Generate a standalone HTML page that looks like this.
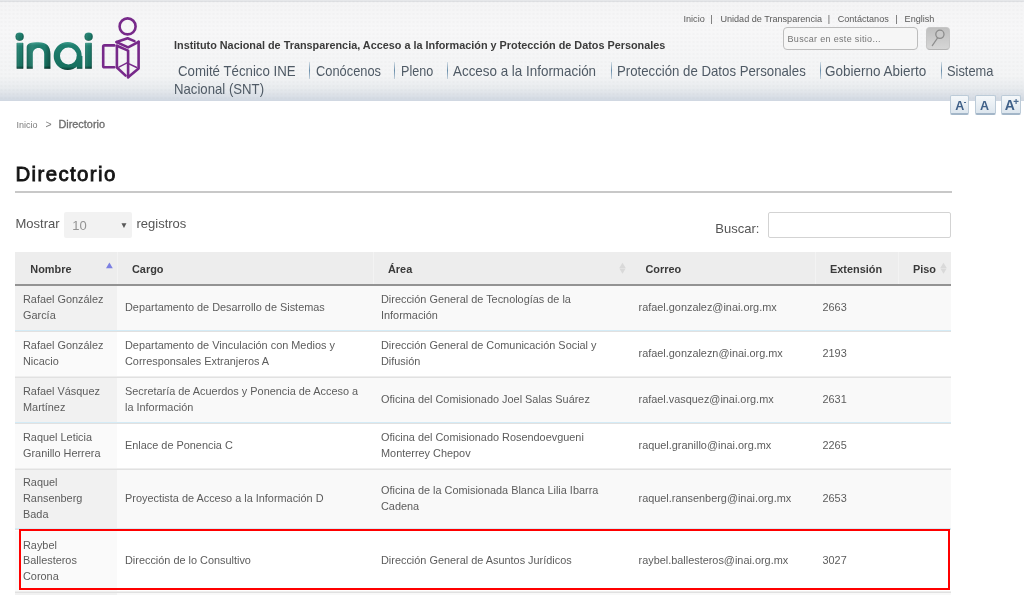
<!DOCTYPE html>
<html><head><meta charset="utf-8">
<style>
*{margin:0;padding:0;box-sizing:border-box}
html,body{width:1024px;height:595px;overflow:hidden;background:#fff;font-family:"Liberation Sans",sans-serif;position:relative}
#wrap{position:absolute;left:0;top:0;width:1024px;height:595px;will-change:transform}
.abs{position:absolute;white-space:nowrap}
#hdr{position:absolute;left:0;top:0;width:1024px;height:100.5px;
 background:linear-gradient(to bottom,#e9eaec 0px,#dfe1e4 1.5px,#f4f4f5 2.5px,#f7f7f8 30px,#f3f4f5 76px,#e8ebee 88px,#dde2e8 94.5px,#d1d8e2 100.5px)}
#dots{position:absolute;left:0;top:0;width:1024px;height:100.5px;
 background-image:radial-gradient(circle,rgba(0,0,0,0.022) 0.6px,transparent 0.9px);background-size:4px 4px;background-position:-0.5px 0px}
.toplinks{font-size:9.1px;color:#5a5a5a;top:14px}
.title{left:174px;top:39px;font-size:10.85px;font-weight:bold;color:#3b3b3b}
.nav{font-size:14.8px;color:#4f5a65;top:63.2px;transform-origin:0 0}
.sep{position:absolute;width:1.3px;height:16.5px;top:62px;background:linear-gradient(#d3dde5,#6b8fab 50%,#c3d0db)}
.fbtn{position:absolute;top:94.9px;width:20px;height:20.6px;border-radius:2px;
 background:linear-gradient(#f5f8fa,#dde6ee);border:1px solid #bccbd8;border-bottom:2px solid #a3b6c8}
.fA{top:98.6px;font-size:12.5px;font-weight:bold;color:#3f6088;line-height:14px}
.crumb{}
.row{position:absolute;left:15px;width:936px}
.c{position:absolute;top:0;bottom:2px;display:flex;align-items:center;font-size:10.9px;line-height:15.8px;color:#5c5c5c;white-space:normal}
.th{font-weight:bold;color:#3a3a3a;top:4px;bottom:0}
</style></head><body><div id="wrap">
<div id="hdr"></div><div id="dots"></div>

<!-- logo -->
<svg class="abs" style="left:0;top:0" width="160" height="100" viewBox="0 0 160 100">
 <defs>
  <linearGradient id="tv" x1="0" y1="0" x2="0" y2="1">
   <stop offset="0" stop-color="#3f9d8d"/><stop offset="0.12" stop-color="#1f7f6f"/><stop offset="0.88" stop-color="#17705f"/><stop offset="1" stop-color="#06382f"/>
  </linearGradient>
  <linearGradient id="ta" gradientUnits="userSpaceOnUse" x1="0" y1="42" x2="0" y2="70">
   <stop offset="0" stop-color="#3f9d8d"/><stop offset="0.12" stop-color="#1f7f6f"/><stop offset="0.88" stop-color="#17705f"/><stop offset="1" stop-color="#06382f"/>
  </linearGradient>
  <linearGradient id="th" x1="0" y1="0" x2="1" y2="0">
   <stop offset="0" stop-color="#000" stop-opacity="0.12"/><stop offset="0.25" stop-color="#fff" stop-opacity="0.06"/><stop offset="0.75" stop-color="#000" stop-opacity="0"/><stop offset="1" stop-color="#000" stop-opacity="0.28"/>
  </linearGradient>
 </defs>
 <g fill="url(#tv)">
  <circle cx="19.6" cy="36.7" r="4.1"/>
  <rect x="16.6" y="42.8" width="6.7" height="26" rx="0.6"/>
  <path d="M26.7 68.8 V47.5 C26.7 43.2 30.5 42.2 38.5 42.2 C47 42.2 50.4 46.5 50.4 54 V68.8 H44.2 V54 C44.2 50.2 42 47.9 38.5 47.9 C35 47.9 32.8 50.2 32.8 54 V68.8 Z"/>
  <path fill="url(#ta)" fill-rule="evenodd" d="M53.7 56 A14 14 0 1 0 81.7 56 A14 14 0 1 0 53.7 56 Z M60 56 A8.4 8.4 0 1 0 76.8 56 A8.4 8.4 0 1 0 60 56 Z"/>
  <rect fill="url(#ta)" x="76.8" y="56" width="5.6" height="12.8"/>
  <circle cx="88.6" cy="36.7" r="4.1"/>
  <rect x="85.1" y="42.8" width="6.7" height="26" rx="0.6"/>
 </g>
 <g fill="url(#th)">
  <circle cx="19.6" cy="36.7" r="4.1"/>
  <rect x="16.6" y="42.8" width="6.7" height="26" rx="0.6"/>
  <path d="M26.7 68.8 V47.5 C26.7 43.2 30.5 42.2 38.5 42.2 C47 42.2 50.4 46.5 50.4 54 V68.8 H44.2 V54 C44.2 50.2 42 47.9 38.5 47.9 C35 47.9 32.8 50.2 32.8 54 V68.8 Z"/>
  <circle cx="88.6" cy="36.7" r="4.1"/>
  <rect x="85.1" y="42.8" width="6.7" height="26" rx="0.6"/>
 </g>
 <g fill="none" stroke="#77298a" stroke-width="2.6" stroke-linejoin="round" stroke-linecap="round">
  <circle cx="127.6" cy="26.4" r="8"/>
  <path d="M114.3 45.4 H104.5 Q103.2 45.4 103.2 46.7 V65.9 Q103.2 67.2 104.5 67.2 H114.3"/>
  <path d="M116.6 42.1 L127.6 38.3 L134.5 41.1"/>
  <path d="M116.6 42.1 L128.1 47.4 L138.6 41.9"/>
  <path d="M116.9 45.8 L128.1 50.6 L128.1 77.2"/>
  <path d="M116.9 45.8 V67.5 L125.6 75.6"/>
  <path d="M138.6 41.9 V68.4 L128.1 77.2"/>
  <path d="M118.8 67.1 L127 62.8 L136.7 67.5" stroke-width="1.4"/>
 </g>
</svg>

<div class="abs title">Instituto Nacional de Transparencia, Acceso a la Información y Protección de Datos Personales</div>

<div class="abs toplinks" style="left:683.5px">Inicio</div>
<div class="abs toplinks" style="left:710.2px">|</div>
<div class="abs toplinks" style="left:720.4px">Unidad de Transparencia</div>
<div class="abs toplinks" style="left:827.7px">|</div>
<div class="abs toplinks" style="left:837.7px">Contáctanos</div>
<div class="abs toplinks" style="left:895.2px">|</div>
<div class="abs toplinks" style="left:904.6px">English</div>

<div class="abs" style="left:782.5px;top:27px;width:135.5px;height:22.5px;border:1px solid #bdbdbd;border-radius:4px;background:#f6f6f6"></div>
<div class="abs" style="left:787.5px;top:33.8px;font-size:9px;color:#747474;letter-spacing:0.32px">Buscar en este sitio...</div>
<div class="abs" style="left:926px;top:27px;width:23.6px;height:22.6px;border-radius:4px;background:linear-gradient(#bfbfbf,#d6d6d6);border:1px solid #c6c6c6;border-bottom-color:#b4b4b4"></div>
<svg class="abs" style="left:926px;top:27px" width="24" height="23" viewBox="0 0 24 23">
 <circle cx="13.9" cy="7.3" r="4.1" fill="#c9c9c9" stroke="#8c8c8c" stroke-width="1.3"/>
 <path d="M11.6 10.8 L6.3 18.6" stroke="#8e8e8e" stroke-width="1.2" stroke-linecap="round"/>
</svg>

<div class="abs nav" style="left:178.3px;transform:scaleX(0.896)">Comité Técnico INE</div>
<div class="sep" style="left:309px"></div>
<div class="abs nav" style="left:315.6px;transform:scaleX(0.868)">Conócenos</div>
<div class="sep" style="left:393.5px"></div>
<div class="abs nav" style="left:400.6px;transform:scaleX(0.85)">Pleno</div>
<div class="sep" style="left:446.5px"></div>
<div class="abs nav" style="left:453px;transform:scaleX(0.906)">Acceso a la Información</div>
<div class="sep" style="left:610.5px"></div>
<div class="abs nav" style="left:617.2px;transform:scaleX(0.893)">Protección de Datos Personales</div>
<div class="sep" style="left:820px"></div>
<div class="abs nav" style="left:825.4px;transform:scaleX(0.911)">Gobierno Abierto</div>
<div class="sep" style="left:940.5px"></div>
<div class="abs nav" style="left:946.5px;transform:scaleX(0.869)">Sistema</div>
<div class="abs nav" style="left:173.8px;top:80.9px;transform:scaleX(0.89)">Nacional (SNT)</div>

<div class="fbtn" style="left:949.5px;width:19.3px"></div>
<div class="fbtn" style="left:974.9px;width:20.7px"></div>
<div class="fbtn" style="left:1000.6px;width:20px"></div>
<div class="abs fA" style="left:955.2px">A</div><div class="abs" style="left:963.6px;top:101.6px;width:2.6px;height:1.3px;background:#4a6a90"></div>
<div class="abs fA" style="left:980px">A</div>
<div class="abs fA" style="left:1004.8px;font-size:14px;top:97.6px">A</div>
<svg class="abs" style="left:1012px;top:98px" width="8" height="8"><path d="M1.6 3.4 H6.6 M4.1 1 V5.9" stroke="#4a6a90" stroke-width="1.2"/></svg>
<div class="abs crumb" style="left:16.6px;top:119.8px;font-size:9px;color:#7c7c7c">Inicio</div>
<div class="abs crumb" style="left:45.6px;top:118.4px;font-size:10.5px;color:#808080">&gt;</div>
<div class="abs crumb" style="left:58.4px;top:117.8px;font-size:10.9px;color:#6c6c6c;-webkit-text-stroke:0.3px #6c6c6c">Directorio</div>
<div class="abs" style="left:15.4px;top:162.9px;font-size:20.4px;letter-spacing:1.4px;-webkit-text-stroke:0.85px #141414;color:#141414">Directorio</div>
<div class="abs" style="left:15px;top:191px;width:937px;height:2px;background:#c8c8c8"></div>

<div class="abs" style="left:15.5px;top:216px;font-size:13px;color:#555">Mostrar</div>
<div class="abs" style="left:64px;top:212px;width:68px;height:26px;background:#f2f2f2;border-radius:2px"></div>
<div class="abs" style="left:72.2px;top:217.7px;font-size:13px;color:#939393">10</div>
<div class="abs" style="left:119.8px;top:219.6px;font-size:8.5px;color:#585858">▼</div>
<div class="abs" style="left:136.5px;top:216px;font-size:13px;color:#555">registros</div>

<div class="abs" style="left:715.3px;top:221px;font-size:13px;color:#555">Buscar:</div>
<div class="abs" style="left:768px;top:211.5px;width:183.4px;height:26.3px;border:1px solid #d3d3d3;border-radius:2px;background:#fff"></div>

<!-- table -->
<div class="row" style="top:252px;height:34px;background:#ededed;border-bottom:2px solid #939393">
 <div class="abs" style="left:102.2px;top:0;width:1px;height:32px;background:#f3f3f3"></div>
 <div class="abs" style="left:358.4px;top:0;width:1px;height:32px;background:#f3f3f3"></div>
 <div class="abs" style="left:799.5px;top:0;width:1px;height:32px;background:#f3f3f3"></div>
 <div class="abs" style="left:882.8px;top:0;width:1px;height:32px;background:#f3f3f3"></div>
 <svg class="abs" style="left:90px;top:10px" width="10" height="8"><path d="M1 6.3 L4.4 0.5 L7.8 6.3 Z" fill="#7c80e2"/></svg>
 <svg class="abs" style="left:603px;top:10px" width="10" height="14"><path d="M1.3 5.9 L4.5 0.7 L7.7 5.9 Z M1.3 6.6 L4.5 11.8 L7.7 6.6 Z" fill="#d9d9d9"/></svg>
 <svg class="abs" style="left:924.2px;top:10px" width="10" height="14"><path d="M1.3 5.9 L4.5 0.7 L7.7 5.9 Z M1.3 6.6 L4.5 11.8 L7.7 6.6 Z" fill="#d9d9d9"/></svg>
 <div class="c th" style="left:15.3px">Nombre</div>
 <div class="c th" style="left:117px">Cargo</div>
 <div class="c th" style="left:373px">Área</div>
 <div class="c th" style="left:630.5px">Correo</div>
 <div class="c th" style="left:815px">Extensión</div>
 <div class="c th" style="left:898px">Piso</div>
</div>

<div class="row" style="top:286px;height:46px;background:#f9f9f9">
 <div class="c" style="left:0;width:102px;background:#f1f1f1;padding:0 8px">Rafael González García</div>
 <div class="c" style="left:102px;width:256px;padding:0 8px">Departamento de Desarrollo de Sistemas</div>
 <div class="c" style="left:358px;width:257px;padding:0 8px">Dirección General de Tecnologías de la Información</div>
 <div class="c" style="left:615.5px;width:184px;padding:0 8px">rafael.gonzalez@inai.org.mx</div>
 <div class="c" style="left:799.5px;width:82.5px;padding:0 8px">2663</div>
 <div class="abs" style="left:0;bottom:1px;width:936px;height:1px;background:#d4ebf6"></div>
 <div class="abs" style="left:0;bottom:0;width:936px;height:1px;background:#e1e1e1"></div>
</div>
<div class="row" style="top:332px;height:46px;background:#ffffff">
 <div class="c" style="left:0;width:102px;background:#fafafa;padding:0 8px">Rafael González Nicacio</div>
 <div class="c" style="left:102px;width:256px;padding:0 8px">Departamento de Vinculación con Medios y Corresponsales Extranjeros A</div>
 <div class="c" style="left:358px;width:257px;padding:0 8px">Dirección General de Comunicación Social y Difusión</div>
 <div class="c" style="left:615.5px;width:184px;padding:0 8px">rafael.gonzalezn@inai.org.mx</div>
 <div class="c" style="left:799.5px;width:82.5px;padding:0 8px">2193</div>
 <div class="abs" style="left:0;bottom:1px;width:936px;height:1px;background:#eeeeee"></div>
 <div class="abs" style="left:0;bottom:0;width:936px;height:1px;background:#e1e1e1"></div>
</div>
<div class="row" style="top:378px;height:46px;background:#f9f9f9">
 <div class="c" style="left:0;width:102px;background:#f1f1f1;padding:0 8px">Rafael Vásquez Martínez</div>
 <div class="c" style="left:102px;width:256px;padding:0 8px">Secretaría de Acuerdos y Ponencia de Acceso a la Información</div>
 <div class="c" style="left:358px;width:257px;padding:0 8px">Oficina del Comisionado Joel Salas Suárez</div>
 <div class="c" style="left:615.5px;width:184px;padding:0 8px">rafael.vasquez@inai.org.mx</div>
 <div class="c" style="left:799.5px;width:82.5px;padding:0 8px">2631</div>
 <div class="abs" style="left:0;bottom:1px;width:936px;height:1px;background:#d4ebf6"></div>
 <div class="abs" style="left:0;bottom:0;width:936px;height:1px;background:#e1e1e1"></div>
</div>
<div class="row" style="top:424px;height:46px;background:#ffffff">
 <div class="c" style="left:0;width:102px;background:#fafafa;padding:0 8px">Raquel Leticia Granillo Herrera</div>
 <div class="c" style="left:102px;width:256px;padding:0 8px">Enlace de Ponencia C</div>
 <div class="c" style="left:358px;width:257px;padding:0 8px">Oficina del Comisionado Rosendoevgueni Monterrey Chepov</div>
 <div class="c" style="left:615.5px;width:184px;padding:0 8px">raquel.granillo@inai.org.mx</div>
 <div class="c" style="left:799.5px;width:82.5px;padding:0 8px">2265</div>
 <div class="abs" style="left:0;bottom:1px;width:936px;height:1px;background:#eeeeee"></div>
 <div class="abs" style="left:0;bottom:0;width:936px;height:1px;background:#e1e1e1"></div>
</div>
<div class="row" style="top:470px;height:60px;background:#f9f9f9">
 <div class="c" style="left:0;width:102px;background:#f1f1f1;padding:0 8px">Raquel Ransenberg Bada</div>
 <div class="c" style="left:102px;width:256px;padding:0 8px">Proyectista de Acceso a la Información D</div>
 <div class="c" style="left:358px;width:257px;padding:0 8px">Oficina de la Comisionada Blanca Lilia Ibarra Cadena</div>
 <div class="c" style="left:615.5px;width:184px;padding:0 8px">raquel.ransenberg@inai.org.mx</div>
 <div class="c" style="left:799.5px;width:82.5px;padding:0 8px">2653</div>
 <div class="abs" style="left:0;bottom:1px;width:936px;height:1px;background:#d4ebf6"></div>
 <div class="abs" style="left:0;bottom:0;width:936px;height:1px;background:#e1e1e1"></div>
</div>
<div class="row" style="top:530px;height:63px;background:#ffffff">
 <div class="c" style="top:1.4px;left:0;width:102px;background:#fafafa;padding:0 8px">Raybel Ballesteros Corona</div>
 <div class="c" style="top:1.4px;left:102px;width:256px;padding:0 8px">Dirección de lo Consultivo</div>
 <div class="c" style="top:1.4px;left:358px;width:257px;padding:0 8px">Dirección General de Asuntos Jurídicos</div>
 <div class="c" style="top:1.4px;left:615.5px;width:184px;padding:0 8px">raybel.ballesteros@inai.org.mx</div>
 <div class="c" style="top:1.4px;left:799.5px;width:82.5px;padding:0 8px">3027</div>
 <div class="abs" style="left:0;bottom:1px;width:936px;height:1px;background:#eeeeee"></div>
 <div class="abs" style="left:0;bottom:0;width:936px;height:1px;background:#e1e1e1"></div>
</div>
<div class="row" style="top:593px;height:10px;background:#f9f9f9"><div class="c" style="left:0;width:102px;background:#f1f1f1"></div></div>
<div class="abs" style="left:18.8px;top:528.9px;width:931.1px;height:60.7px;border:2.95px solid #ff0000"></div>
</div></body></html>
